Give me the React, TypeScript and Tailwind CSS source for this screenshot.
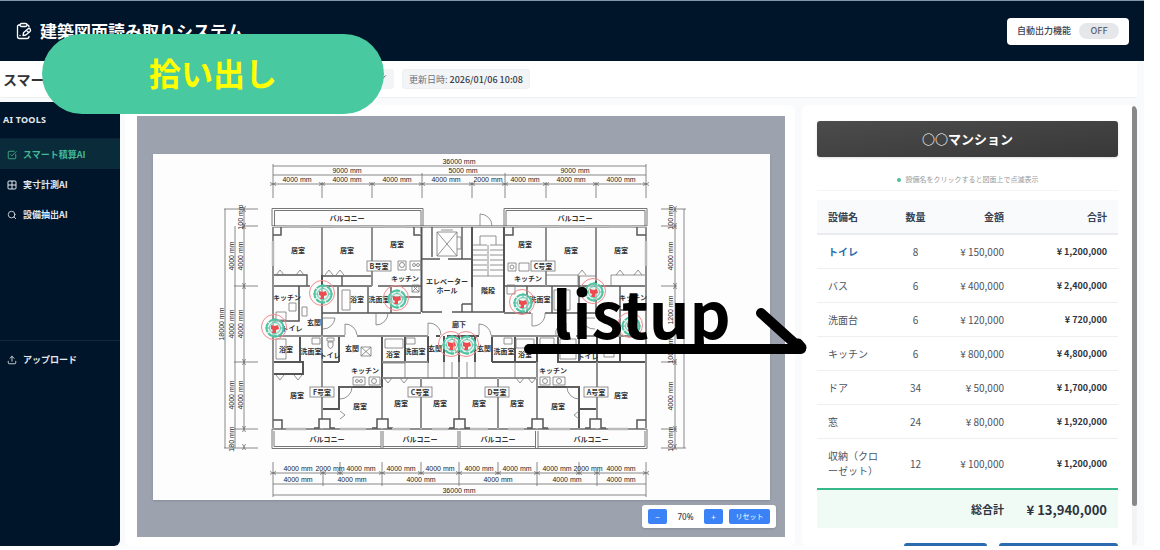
import React from "react";
import { SquareCheckBig, Search, Upload, ChevronDown } from "lucide-react";

type Label = [string, number, number];

const DIMENSIONS: Label[] = [
  ["36000 mm", 459, 163], ["9000 mm", 347, 172], ["5000 mm", 463, 172], ["9000 mm", 575, 172],
  ["4000 mm", 297, 181], ["4000 mm", 347, 181], ["4000 mm", 397, 181], ["4000 mm", 446, 181],
  ["2000 mm", 488, 181], ["4000 mm", 525, 181], ["4000 mm", 571, 181], ["4000 mm", 621, 181],
  ["4000 mm", 298, 470], ["2000 mm", 330, 470], ["4000 mm", 361, 470], ["4000 mm", 401, 470],
  ["4000 mm", 440, 470], ["4000 mm", 479, 470], ["4000 mm", 517, 470], ["4000 mm", 557, 470],
  ["2000 mm", 588, 470], ["4000 mm", 621, 470],
  ["4000 mm", 298, 481], ["4000 mm", 352, 481], ["4000 mm", 421, 481], ["4000 mm", 498, 481],
  ["4000 mm", 567, 481], ["4000 mm", 621, 481], ["36000 mm", 459, 492],
];

const SIDE_DIMENSIONS: Label[] = [
  ["100 mm", 243, 216], ["4000 mm", 234, 255], ["4000 mm", 243, 255], ["18000 mm", 224, 323],
  ["4000 mm", 234, 323], ["4000 mm", 243, 323], ["4000 mm", 234, 394], ["4000 mm", 243, 394],
  ["180 mm", 234, 438], ["100 mm", 673, 216], ["4000 mm", 673, 255], ["1200 mm", 673, 309],
  ["100 mm", 673, 350], ["4000 mm", 673, 395], ["100 mm", 673, 438],
];

const ROOMS: Label[] = [
  ["バルコニー", 347, 220], ["バルコニー", 575, 220],
  ["居室", 298, 252], ["居室", 347, 252], ["居室", 397, 246],
  ["居室", 525, 246], ["居室", 571, 252], ["居室", 621, 252],
  ["キッチン", 405, 280], ["キッチン", 528, 280], ["キッチン", 287, 299], ["キッチン", 633, 299],
  ["エレベーター", 447, 283], ["ホール", 447, 292], ["階段", 488, 292], ["廊下", 459, 326],
  ["浴室", 357, 301], ["洗面室", 379, 301], ["洗面室", 540, 301], ["玄関", 314, 324], ["トイレ", 292, 330],
  ["浴室", 286, 351], ["洗面室", 311, 353], ["トイレ", 330, 357], ["玄関", 352, 350],
  ["浴室", 393, 356], ["洗面室", 415, 353], ["玄関", 435, 350], ["玄関", 484, 350],
  ["洗面室", 504, 353], ["浴室", 525, 356], ["トイレ", 588, 358],
  ["キッチン", 365, 372], ["キッチン", 553, 372],
  ["居室", 297, 397], ["居室", 360, 408], ["居室", 401, 405], ["居室", 440, 405],
  ["居室", 479, 405], ["居室", 517, 405], ["居室", 558, 408], ["居室", 621, 397],
  ["バルコニー", 327, 441], ["バルコニー", 420, 441], ["バルコニー", 498, 441], ["バルコニー", 591, 441],
];

const UNITS: Label[] = [
  ["B号室", 379, 265], ["C号室", 543, 265], ["F号室", 322, 391],
  ["C号室", 420, 391], ["D号室", 497, 391], ["A号室", 596, 391],
];

const MARKERS: [number, number][] = [
  [323, 293], [397, 298], [275, 327], [523, 302], [594, 291], [631, 325], [452, 344], [467, 344],
];

const PILLARS = [319, 377, 454, 532, 590];

const TOP_TICKS = [273, 322, 372, 422, 472, 505, 546, 596, 646];
const BOTTOM_TICKS = [273, 323, 340, 382, 421, 459, 498, 537, 579, 597, 646];

function FloorPlan() {
  return (
    <svg viewBox="153 153 617 346" className="block h-auto w-full" role="img" aria-label="平面図">
      <rect x="153" y="153" width="617" height="346" fill="#fdfdfd" />

      <g stroke="#6b6b6b" strokeWidth="0.8" fill="none">
        <path d="M273 165H646M273 174H646M273 183H646M273 163V197M646 163V197M422 172V197M505 172V197M322 181V197M372 181V197M472 181V197M546 181V197M596 181V197" />
        <path d="M273 472H646M273 483H646M273 494H646M273 461V496M646 461V496M323 470V485M340 461V474M382 461V485M421 461V474M459 461V485M498 461V474M537 461V485M579 461V474M597 470V485" />
        <path d="M225 208V447M235 225V447M244 208V428M224 208H258M242 225H258M234 285H258M234 361H258M234 428H258M224 447H258" />
        <path d="M675 208V447M684 208V447M661 208H686M661 225H677M661 285H677M661 361H677M661 428H677M661 447H686" />
        {TOP_TICKS.map((x) => (
          <path key={x} d={`M${x - 3} 181.500l6 3M${x - 3} 184.500l6-3`} />
        ))}
        {BOTTOM_TICKS.map((x) => (
          <path key={x} d={`M${x - 3} 470.500l6 3M${x - 3} 473.500l6-3`} />
        ))}
        {[208, 225, 285, 361, 428, 446].map((y) => (
          <path key={y} d={`M242.500 ${y - 3}l3 6M245.500 ${y - 3}l-3 6M673.500 ${y - 3}l3 6M676.500 ${y - 3}l-3 6`} />
        ))}
      </g>

      <g stroke="#777" strokeWidth="1" fill="none">
        <path d="M272 225V207.500H423V225M274.500 225V209.500H421V225M504 225V207.500H647V225M506 225V209.500H645V225" />
        <path d="M272 428V447.500H647V428M274 430V445.500H381M383 445.500H458M460 445.500H535M538 445.500H645V430M381 430V447M383 430V447M458 430V447M460 430V447M535.500 430V447M538 430V447" />
      </g>

      <g stroke="#555" strokeWidth="2" fill="none">
        <path d="M272 225.500H647M273 225V428M646 225V428M272 428H647" />
        <path d="M322 226V285M372 226V285M421.500 226V311M472 226V286M504 226V311M546 226V285M596 226V285" />
        <path d="M322 285V335M299 285V320H273M273 335H322M322 312H421" strokeWidth="1.600" />
        <path d="M273 274H307V285M273 285H310M322 275H342V285H322M342 285H372M342 275H372M378 285H421" strokeWidth="1.400" />
        <path d="M338 286V312M368 286V312M391 286V312M391 296H421" strokeWidth="1.400" />
        <path d="M422 258H440M448 258H462V226M462 258H472M472 286V311M422 311H442M452 311H504M432 226V256M462 303H472M462 303V311" strokeWidth="1.400" />
        <path d="M504 285H596M504 312H531M545 312H596V285M527 285V312M552 285V312M579 275V312M596 285H646M620 285V335M620 309H646" strokeWidth="1.400" />
        <path d="M273 335H345M357 335H428M436 335H440M447 335H479M491 335H566M576 335H646" />
        <path d="M300 335V361M322 335V428M339 335V361M273 361H303V373H273M339 361H322M382 335V428M382 361H428V335M405 335V361M322 408H339V386H382" />
        <path d="M421 377V428M382 377H459M459 335V428M444 335V361M475 335V361M492 335V361M515 335V361M492 361H537V335M498 377V428M459 377H537M537 335V428" />
        <path d="M537 386H579V428M579 408H597M597 335V428M597 361H646M579 386V408M558 335V361H597M579 335V361M620 335V361" />
      </g>

      <g stroke="#fdfdfd" strokeWidth="0.7" fill="none">
        <path d="M272 225.500H647M273 225V428M646 225V428M272 428H647M322 226V274M372 226V285M546 226V285M596 226V280M382 386V428M459 361V428M537 361V428M421 377V428M498 377V428M273 335H345M357 335H428M491 335H566M576 335H646M382 361H428M322 335V428M597 361V428M382 377H459M459 377H537" />
      </g>

      <g fill="#fdfdfd" stroke="#555" strokeWidth="1.500">
        <path d="M273 234h8v-8M422 234h-8v-8M504 234h9v-8M646 234h-9v-8M273 419h9v9M646 419h-9v9" />
        {PILLARS.map((x) => (
          <path key={x} d={`M${x - 5} 427H${x}v-9h11v9h5`} />
        ))}
      </g>

      <g stroke="#777" strokeWidth="0.8" fill="none">
        <path d="M437 231H457V255H437zM437 231l20 24M457 231l-20 24M441 229h12M457 236h4v12h-4" />
        <path d="M480 244V235H496V244M488 244V275M473 244H487M473 249H487M473 254H487M473 259H487M473 264H487M473 269H487M473 275H503M490 244H503M490 249H503M490 254H503M490 259H503M490 264H503M490 269H503" />
        <path d="M480 225V213A12 12 0 0 1 492 225" />
        <path d="M322 317h13A12 12 0 0 1 323 328M345 334V323A12 12 0 0 1 357 334M376 312v12A12 12 0 0 0 388 312M428 334V322A12 12 0 0 1 441 334M479 334V323A12 12 0 0 1 491 334M532 312v13A12 12 0 0 0 545 312M566 334V322A10 10 0 0 0 556 334M595 317h-13A12 12 0 0 0 595 328" />
        <path d="M340 386h12A12 12 0 0 1 340 398M579 386h-12A12 12 0 0 0 579 398" />
        <path d="M276 274l4-5 4 5M296 274l4-5 4 5M325 274l4-5 4 5M336 274l4-5 4 5M578 274l4-5 4 5M616 274l4-5 4 5M634 274l4-5 4 5M276 374l4 5 4-5M294 374l4 5 4-5M384 377l4 5 4-5M400 377l4 5 4-5M516 377l4 5 4-5M528 377l4 5 4-5M340 410l5 4-5 4M579 410l-5 4 5 4" />
        <path d="M382 362H405V377M428 361V377M444 361V377M475 361V377M515 361V377M452 361V377M467 361V377M546 274H578V285M578 275H596M611 285V274H645" />
        <path d="M342 289h8v20h-8zM554 289h16v20h-16zM276 338h10v20h-10zM312 337h8v6h-8zM406 337h9v6h-9zM385 338h18v9h-18zM504 337h8v6h-8zM516 338h18v9h-18zM540 337h14v8h-14zM560 338h16v20h-16z" />
        <path d="M398 260h8v9h-8zM410 260h11v9h-11zM508 262h8v8h-8zM519 262h10v8h-10zM412 284h7v7h-7zM507 284h8v9h-8zM289 302h7v8h-7zM276 311h10v8h-10zM353 376h12v8h-12zM369 376h11v8h-11zM540 376h10v8h-10zM553 376h12v8h-12zM361 346h10v9h-10zM302 306h5v9h-5zM604 344h10v12h-10z" />
        <path d="M361 346l10 9M371 346l-10 9M412 284l7 7M419 284l-7 7" />
        <circle cx="402" cy="264" r="2.500" />
        <circle cx="414" cy="264" r="1.500" /><circle cx="418" cy="264" r="1.500" />
        <circle cx="357" cy="380" r="1.500" /><circle cx="361" cy="380" r="1.500" /><circle cx="374" cy="380" r="2.500" />
        <circle cx="512" cy="266" r="2" /><circle cx="545" cy="380" r="2.500" /><circle cx="559" cy="380" r="2.500" />
        <path d="M327 337h7v3h-7zM328 341h5v4q-2.500 5-5 0z" />
      </g>

      <g stroke="#bbb" strokeWidth="2.500">
        <path d="M286 225.500H310M334 225.500H360M384 225.500H406M518 225.500H540M559 225.500H584M609 225.500H632M273 240V265M646 240V265M286 428H306M340 428H366M392 428H410M432 428H448M470 428H488M508 428H524M549 428H570M608 428H628" />
      </g>

      <g fontFamily="'Liberation Sans', sans-serif" fontSize="7" fill="#222" textAnchor="middle">
        {DIMENSIONS.map(([text, x, y], i) => (
          <text key={i} x={x} y={y}>{text}</text>
        ))}
        {SIDE_DIMENSIONS.map(([text, x, y], i) => (
          <text key={i} x={x} y={y} transform={`rotate(-90 ${x} ${y})`}>{text}</text>
        ))}
      </g>

      <g fontFamily="'Noto Sans CJK JP', sans-serif" fontSize="7" fontWeight="700" fill="#333" textAnchor="middle">
        {ROOMS.map(([text, x, y], i) => (
          <text key={i} x={x} y={y}>{text}</text>
        ))}
        {UNITS.map(([text, x, y], i) => (
          <g key={i}>
            <rect x={x - 12} y={y - 5} width="24" height="10" fill="#fdfdfd" stroke="#777" strokeWidth="0.8" />
            <text x={x} y={y + 3}>{text}</text>
          </g>
        ))}
      </g>

      {MARKERS.map(([x, y], i) => (
        <g key={i} fill="none">
          <circle cx={x - 1} cy={y - 1} r="12.500" stroke="#f28b8b" strokeWidth="1" />
          <circle cx={x} cy={y} r="8.500" fill="#d8efe8" fillOpacity="0.6" stroke="#4fc3a1" strokeWidth="2" strokeDasharray="10 1" />
          <circle cx={x} cy={y} r="5.500" stroke="#63c9ac" strokeWidth="1" />
          <path d={`M${x - 10} ${y}h4M${x + 6} ${y}h4M${x} ${y - 10}v4M${x} ${y + 6}v4`} stroke="#4fc3a1" strokeWidth="1" />
          <path d={`M${x - 4} ${y - 3}l4 1 3-1 1 4-3 1v3h-4l1-3-2-1z`} fill="#ee4b50" />
        </g>
      ))}
    </svg>
  );
}

function ClipboardIcon() {
  return (
    <svg width="16" height="18" viewBox="0 0 16 18" fill="none" stroke="currentColor" strokeWidth="1.300" strokeLinecap="round" strokeLinejoin="round" aria-hidden="true">
      <path d="M4 3H3Q1.500 3 1.500 4.500V14.500Q1.500 16.500 3.500 16.500H11Q13 16.500 13 14.500" />
      <path d="M11 3Q13 3 13 5" />
      <rect x="4" y="1.500" width="7" height="3" rx="1.500" />
      <path d="M7 13.500L7.500 10.800 12 6.800Q13.500 6 14.300 7.200 15 8.500 14 9.500L9.800 13z" />
      <path d="M4 13.500h.1M11 9l1.800 1.600" />
    </svg>
  );
}

function GridIcon() {
  return (
    <svg width="10" height="10" viewBox="0 0 10 10" fill="none" stroke="currentColor" strokeWidth="1" aria-hidden="true">
      <rect x="1" y="1" width="8" height="8" rx="1" />
      <path d="M5 1v8M1 5h8" />
    </svg>
  );
}

const TOOLS = [
  { label: "スマート積算AI", icon: <SquareCheckBig size={10} />, active: true },
  { label: "実寸計測AI", icon: <GridIcon />, active: false },
  { label: "設備抽出AI", icon: <Search size={10} />, active: false },
];

function Sidebar() {
  return (
    <nav className="mt-1 flex w-[120px] shrink-0 flex-col rounded-br-md bg-[#001529] text-[9px] font-bold text-[#e4e9ee]">
      <h2 className="h-[37px] border-b border-[#0b2135] pl-[3px] font-['Noto_Sans'] leading-[36px] tracking-wide">AI TOOLS</h2>
      <ul className="h-[202px] border-b border-[#10283b]">
        {TOOLS.map(({ label, icon, active }) => (
          <li key={label}>
            <a
              href="#"
              className={
                active
                  ? "flex h-[30px] items-center gap-[6px] bg-[#0a2b3a] pl-[7px] pt-px text-[#43b893]"
                  : "flex h-[30px] items-center gap-[6px] pl-[7px] pt-px"
              }
            >
              {icon}
              {label}
            </a>
          </li>
        ))}
      </ul>
      <a href="#" className="flex h-[37px] items-center gap-[6px] pl-[7px] pt-px">
        <Upload size={10} strokeWidth={2} />
        アップロード
      </a>
    </nav>
  );
}

function Viewer() {
  return (
    <main className="ml-[5px] mr-[7px] min-w-0 flex-1 rounded-md bg-white pb-[9px] pl-3 pr-[10px] pt-[11px]">
      <div className="relative flex h-full items-center bg-[#9ca3af] pl-4 pr-[15px]">
        <div className="w-full shadow-sm">
          <FloorPlan />
        </div>
        <div className="absolute bottom-[9px] right-[9px] flex items-center rounded-[3px] bg-white px-[6px] py-1 text-[8px] leading-[15px] shadow">
          <button className="w-[19px] rounded-[2px] bg-[#3b82f6] text-white" aria-label="縮小">−</button>
          <span className="w-[37px] text-center font-['Noto_Sans'] font-medium text-[#374151]">70%</span>
          <button className="w-[19px] rounded-[2px] bg-[#3b82f6] text-white" aria-label="拡大">+</button>
          <button className="ml-[6px] w-[41px] rounded-[2px] bg-[#3b82f6] text-[7px] text-white">リセット</button>
        </div>
      </div>
    </main>
  );
}

const ITEMS = [
  ["トイレ", "8", "¥ 150,000", "¥ 1,200,000"],
  ["バス", "6", "¥ 400,000", "¥ 2,400,000"],
  ["洗面台", "6", "¥ 120,000", "¥ 720,000"],
  ["キッチン", "6", "¥ 800,000", "¥ 4,800,000"],
  ["ドア", "34", "¥ 50,000", "¥ 1,700,000"],
  ["窓", "24", "¥ 80,000", "¥ 1,920,000"],
  ["収納（クローゼット）", "12", "¥ 100,000", "¥ 1,200,000"],
];

function Estimate() {
  return (
    <aside className="mr-[7px] flex w-[335px] shrink-0 overflow-hidden rounded-md bg-white">
      <div className="min-w-0 flex-1 pl-[15px] pr-[14px] pt-4">
        <h2 className="h-9 rounded-[3px] bg-linear-to-br from-[#4c4c4c] to-[#383838] text-center text-[13px] font-bold leading-9 text-white shadow">
          ○○マンション
        </h2>
        <p className="mt-[12px] flex h-[22px] items-center justify-center gap-[5px] border-b border-[#f4f4f4] text-[7px] text-[#999]">
          <span className="h-1 w-1 rounded-full bg-[#4dbf9b]" />
          設備名をクリックすると図面上で点滅表示
        </p>
        <table className="mt-[9px] w-full table-fixed border-collapse text-[10px] leading-[15px] text-[#4b5563]">
          <colgroup>
            <col className="w-[73px]" />
            <col className="w-[51px]" />
            <col className="w-[74px]" />
            <col />
          </colgroup>
          <thead>
            <tr className="h-[34px] border-b-2 border-[#e9ebee] bg-[#f8fafc] text-[#374151]">
              <th className="pl-[11px] text-left font-bold">設備名</th>
              <th className="text-center font-bold">数量</th>
              <th className="pr-[11px] text-right font-bold">金額</th>
              <th className="pr-[11px] text-right font-bold">合計</th>
            </tr>
          </thead>
          <tbody>
            {ITEMS.map(([name, count, price, total], i) => (
              <tr key={name} className={i === ITEMS.length - 1 ? "h-[51px]" : "h-[34px] border-b border-[#eeeff1]"}>
                <td className="pl-[11px] pr-[10px] [line-break:anywhere]">
                  {i === 0 ? <button className="font-bold text-[#2f6fb0]">{name}</button> : name}
                </td>
                <td className="text-center">{count}</td>
                <td className="pr-[11px] text-right">{price}</td>
                <td className="pr-[11px] text-right text-[9px] font-bold text-[#2d3340]">{total}</td>
              </tr>
            ))}
          </tbody>
          <tfoot>
            <tr className="h-[39px] border-t-2 border-[#35b88c] bg-[#f0fbf5] font-bold text-[#2d3340]">
              <td colSpan={3} className="pr-[11px] text-right text-[11px]">総合計</td>
              <td className="pr-[11px] text-right text-[13px]">¥ 13,940,000</td>
            </tr>
          </tfoot>
        </table>
        <div className="mt-[15px] flex justify-end gap-3">
          <button className="h-7 w-[83px] rounded-[3px] bg-[#2b6cb0] text-[10px] text-white" aria-label="印刷" />
          <button className="h-7 w-[119px] rounded-[3px] bg-[#2b6cb0] text-[10px] text-white" aria-label="出力" />
        </div>
      </div>
      <div className="w-[5px] bg-[#f3f3f3] pt-px">
        <div className="h-[91%] rounded-sm bg-[#888]" />
      </div>
    </aside>
  );
}

function Annotations() {
  return (
    <>
      <div className="absolute left-[42px] top-[34px] flex h-20 w-[342px] items-center justify-center rounded-full bg-[#48c9a0] pb-1 text-[32px] font-bold text-[#ffff00]">
        拾い出し
      </div>
      <div className="absolute left-[552px] top-[265px] text-[64px] font-bold leading-[92px] text-black">listup</div>
      <svg className="absolute left-[520px] top-[300px] h-[60px] w-[292px]" viewBox="520 300 292 60" aria-hidden="true">
        <path d="M529 349H801L761 313" fill="none" stroke="#000" strokeWidth="10" strokeLinecap="round" strokeLinejoin="round" />
        <path d="M801 347.500L798 344" fill="none" stroke="#000" strokeWidth="11" strokeLinecap="round" />
      </svg>
    </>
  );
}

export default function App() {
  return (
    <div className="relative h-screen overflow-hidden bg-white pb-1 pr-4 font-['Noto_Sans_CJK_JP','Noto_Sans',sans-serif]">
      <div className="flex h-full flex-col bg-[#f9fafb]">
        <header className="flex h-[61px] shrink-0 items-center justify-between border-t border-[#8097a8] bg-[#001529] pl-4 pr-[15px] text-white">
          <h1 className="flex items-center gap-2 text-[17px] font-bold">
            <ClipboardIcon />
            建築図面読み取りシステム
          </h1>
          <div className="flex h-[27px] items-center gap-2 rounded-[4px] bg-white px-[10px] text-[9px] font-medium text-[#374151]">
            自動出力機能
            <button className="h-4 w-10 rounded-full bg-[#e5e7eb] text-[9px] text-[#5b6472]">OFF</button>
          </div>
        </header>
        <div className="mr-[7px] flex h-[37px] shrink-0 items-center rounded-b-[3px] border-b border-[#efefef] bg-white pl-[3px]">
          <h2 className="w-[247px] text-[14px] font-bold text-[#333]">スマート積算AI</h2>
          <button className="flex h-5 w-36 items-center justify-end rounded-[3px] bg-[#f3f4f6] pb-1 pr-[6px] text-[#374151]" aria-label="図面を選択">
            <ChevronDown size={10} />
          </button>
          <p className="ml-2 h-5 rounded-[3px] border border-[#eff0f2] bg-[#f3f4f6] px-[6px] text-[9px] leading-[20px] text-[#6b7280]">
            更新日時: <span className="font-medium text-[#333c4a]">2026/01/06 10:08</span>
          </p>
        </div>
        <div className="flex min-h-0 flex-1">
          <Sidebar />
          <div className="flex min-w-0 flex-1 pt-[7px]">
            <Viewer />
            <Estimate />
          </div>
        </div>
      </div>
      <Annotations />
    </div>
  );
}
